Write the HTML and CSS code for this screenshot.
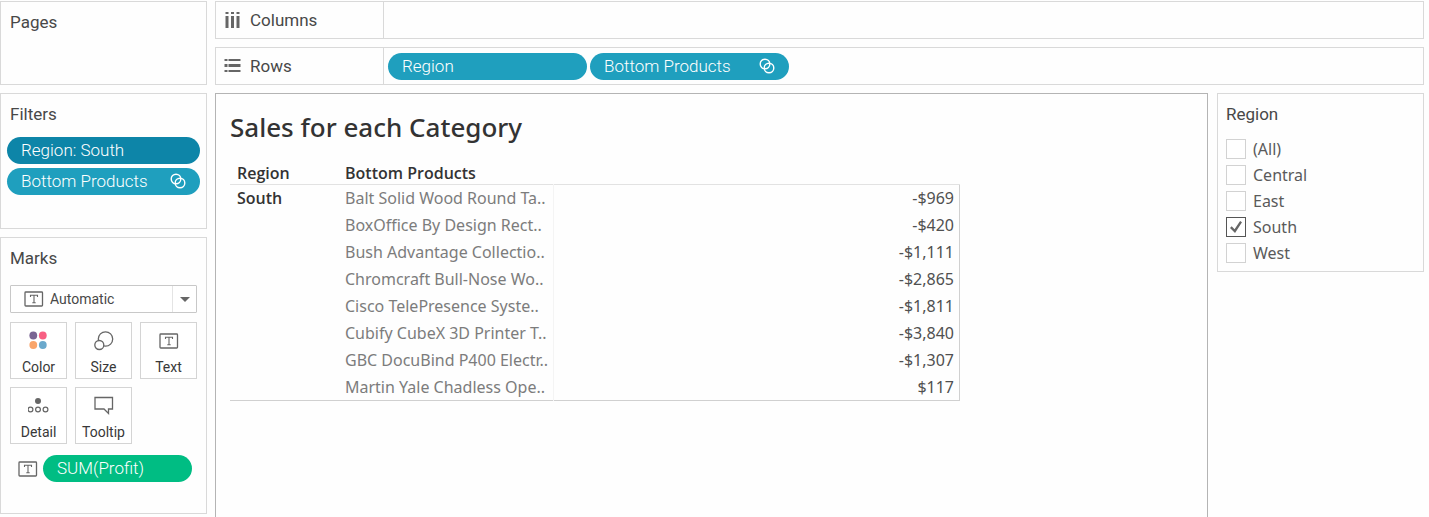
FILE: index.html
```html
<!DOCTYPE html>
<html lang="en">
<head>
<meta charset="utf-8">
<title>Sales for each Category</title>
<link rel="stylesheet" href="styles.css">
</head>
<body>
<svg class="defs" aria-hidden="true">
  <symbol id="i-set" viewBox="0 0 16 16"><g fill="none" stroke="currentColor" stroke-width="1.4"><circle cx="6" cy="6" r="4.8"/><circle cx="10" cy="10" r="4.8"/></g></symbol>
  <symbol id="i-text" viewBox="0 0 20 16"><rect x="1" y="1" width="17.500" height="14" rx=".8" fill="none" stroke="#666" stroke-width="1.3"/><path d="M6.500 6V4.200h7V6M10 4.200v7.600M8.300 11.800h3.400" fill="none" stroke="#666" stroke-width="1.1"/></symbol>
</svg>
<div class="workspace">
  <aside class="side">
    <section class="card pages"><h2>Pages</h2></section>
    <section class="card filters">
      <h2>Filters</h2>
      <div class="pill-list">
        <button class="pill context">Region: South</button>
        <button class="pill">Bottom Products <svg class="set"><use href="#i-set"/></svg></button>
      </div>
    </section>
    <section class="card marks">
      <h2>Marks</h2>
      <div class="mark-type">
        <svg class="text-icon"><use href="#i-text"/></svg>
        <select aria-label="Mark type"><option>Automatic</option></select>
        <span class="arrow"></span>
      </div>
      <div class="mark-grid">
        <button><svg viewBox="0 0 20 20"><circle cx="4.300" cy="4.500" r="3.900" fill="#7a6593"/><circle cx="13.800" cy="4.500" r="3.900" fill="#f85f83"/><circle cx="4.300" cy="14" r="3.900" fill="#f9a56b"/><circle cx="13.800" cy="14" r="3.900" fill="#6ba9cc"/></svg>Color</button>
        <button><svg viewBox="0 0 20 20" fill="#fff" stroke="#666" stroke-width="1.300"><circle cx="11.500" cy="8" r="7.200"/><circle cx="5.300" cy="14" r="4.500"/></svg>Size</button>
        <button><svg viewBox="0 -2 20 20"><use href="#i-text" width="20" height="16"/></svg>Text</button>
        <button><svg class="detail" viewBox="0 0 22 20"><circle cx="10" cy="5" r="3" fill="#666"/><g fill="none" stroke="#666" stroke-width="1.200"><circle cx="2.500" cy="13.500" r="2.400"/><circle cx="10" cy="13.500" r="2.400"/><circle cx="17.500" cy="13.500" r="2.400"/></g></svg>Detail</button>
        <button><svg viewBox="0 0 20 20" fill="none" stroke="#666" stroke-width="1.300"><path d="M1 1.500h17.500v11.500h-4v4.500l-4.500-4.500H1z"/></svg>Tooltip</button>
      </div>
      <div class="mark-row">
        <svg class="text-icon"><use href="#i-text"/></svg>
        <button class="pill measure">SUM(Profit)</button>
      </div>
    </section>
  </aside>
  <div class="content">
    <section class="shelf">
      <h2><svg viewBox="0 0 16 16" fill="#666"><path d="M1 0h3v2H1zM6.500 0h3v2h-3zM12 0h3v2h-3zM1 4h3v12H1zM6.500 4h3v12h-3zM12 4h3v12h-3z"/></svg>Columns</h2>
    </section>
    <section class="shelf">
      <h2><svg viewBox="0 0 16 16" fill="#666"><path d="M0 1h3v2H0zM4 1h12v2H4zM0 6h3v3H0zM4 6h12v3H4zM0 12h3v2H0zM4 12h12v2H4z"/></svg>Rows</h2>
      <div class="fields">
        <button class="pill">Region</button>
        <button class="pill">Bottom Products <svg class="set"><use href="#i-set"/></svg></button>
      </div>
    </section>
    <div class="view">
      <main class="sheet">
        <h1>Sales for each Category</h1>
        <table>
          <colgroup><col class="c-region"><col class="c-product"><col></colgroup>
          <thead><tr><th>Region</th><th>Bottom Products</th><th></th></tr></thead>
          <tbody>
            <tr><th rowspan="8" scope="rowgroup">South</th><td>Balt Solid Wood Round Ta..</td><td>-$969</td></tr>
            <tr><td>BoxOffice By Design Rect..</td><td>-$420</td></tr>
            <tr><td>Bush Advantage Collectio..</td><td>-$1,111</td></tr>
            <tr><td>Chromcraft Bull-Nose Wo..</td><td>-$2,865</td></tr>
            <tr><td>Cisco TelePresence Syste..</td><td>-$1,811</td></tr>
            <tr><td>Cubify CubeX 3D Printer T..</td><td>-$3,840</td></tr>
            <tr><td>GBC DocuBind P400 Electr..</td><td>-$1,307</td></tr>
            <tr><td>Martin Yale Chadless Ope..</td><td>$117</td></tr>
          </tbody>
        </table>
      </main>
      <section class="card region">
        <h2>Region</h2>
        <label><input type="checkbox">(All)</label>
        <label><input type="checkbox">Central</label>
        <label><input type="checkbox">East</label>
        <label><input type="checkbox" checked>South</label>
        <label><input type="checkbox">West</label>
      </section>
    </div>
  </div>
</div>
</body>
</html>
```
FILE: styles.css
```css
* { box-sizing: border-box; }
body {
  margin: 0;
  background: #fefefe;
  color: #484848;
  font: 17px/20px Roboto, "Liberation Sans", sans-serif;
}
.defs { position: absolute; width: 0; height: 0; }
h1, h2 { margin: 0; font-weight: 400; }
h2 { font-size: 17px; line-height: 20px; }
button, select { font: inherit; color: inherit; cursor: pointer; }

.workspace {
  display: grid;
  grid-template-columns: 207px minmax(0, 1fr);
  gap: 8px;
  min-height: 100vh;
  padding: 1px 5px 0 0;
}
.side { display: flex; flex-direction: column; gap: 8px; }
.card { border: 1px solid #d9d9d9; padding: 10px 9px; }
.pages { min-height: 84px; }
.filters { min-height: 136px; padding: 10px 6px; }
.filters h2 { padding-left: 3px; }
.pill-list { display: flex; flex-direction: column; gap: 4px; margin-top: 13px; }
.pill {
  display: flex;
  align-items: center;
  justify-content: space-between;
  height: 27px;
  padding: 0 14px 1px;
  border: 0;
  border-radius: 14px;
  background: #1f9fbe;
  color: #fff;
  font-weight: 300;
  text-align: left;
}
.context { background: #0d85a8; }
.set { width: 16px; height: 16px; }

.marks { min-height: 277px; }
.mark-type { position: relative; margin-top: 17px; }
.mark-type select {
  display: block;
  width: 100%;
  height: 28px;
  padding: 0 30px 0 39px;
  border: 1px solid #c8c8c8;
  border-radius: 1px;
  background: #fff;
  font-size: 14px;
  appearance: none;
}
.text-icon { width: 20px; height: 16px; }
.mark-type .text-icon { position: absolute; left: 14px; top: 6px; pointer-events: none; }
.arrow {
  position: absolute;
  right: 1px;
  top: 1px;
  display: grid;
  place-items: center;
  width: 24px;
  height: 26px;
  border-left: 1px solid #e4e4e4;
  pointer-events: none;
}
.arrow::before { content: ""; border: 5px solid transparent; border-top-color: #666; border-bottom: 0; }
.mark-grid {
  display: grid;
  grid-template-columns: repeat(3, minmax(0, 1fr));
  gap: 8px;
  margin-top: 9px;
}
.mark-grid button {
  display: flex;
  flex-direction: column;
  align-items: center;
  justify-content: space-between;
  height: 57px;
  padding: 8px 0 1px;
  border: 1px solid #d4d4d4;
  background: #fff;
  color: #383838;
  font-size: 14px;
}
.mark-grid svg { width: 20px; height: 20px; }
.mark-grid .detail { width: 22px; }
.mark-row { display: flex; align-items: center; gap: 5px; margin: 11px 5px 0 8px; }
.measure { flex: 1; background: #00bd83; }

.content { display: flex; flex-direction: column; gap: 8px; min-width: 0; }
.shelf { display: flex; height: 38px; border: 1px solid #d9d9d9; }
.shelf h2 {
  display: flex;
  align-items: center;
  gap: 9px;
  width: 168px;
  padding-left: 8px;
  border-right: 1px solid #d9d9d9;
}
.shelf h2 svg { width: 17px; height: 16px; }
.fields { display: flex; align-items: center; gap: 3px; padding-left: 4px; }
.fields .pill { width: 199px; }

.view { display: flex; flex: 1; align-items: flex-start; gap: 9px; }
.sheet {
  flex: 1;
  align-self: stretch;
  min-width: 0;
  padding: 15px 14px;
  border: 1px solid #b4b4b4;
  border-bottom: 0;
  font-family: "Noto Sans", "Open Sans", sans-serif;
}
h1 { color: #333; font-size: 26px; font-weight: 500; line-height: 36px; }
table {
  width: 730px;
  max-width: 100%;
  margin-top: 18px;
  border-collapse: collapse;
  table-layout: fixed;
  font-size: 16px;
  line-height: 20px;
}
.c-region { width: 115px; }
.c-product { width: 208px; }
th { padding: 0 0 0 7px; color: #333; font-family: "Open Sans", sans-serif; font-weight: 600; text-align: left; vertical-align: top; }
thead th { height: 21px; }
thead th + th { padding-left: 0; }
tbody { border: solid #d0d0d0; border-width: 1px 1px 1px 0; }
tbody tr:first-child > * { border-top: 1px solid #e2e2e2; }
tbody th { padding-top: 3px; }
td { height: 27px; padding: 1px 0 0; white-space: nowrap; }
td:nth-last-child(2) { border-right: 1px solid #f4f4f4; color: #7c7c7c; }
td:last-child { padding-right: 5px; color: #505050; text-align: right; }

.region { width: 207px; padding: 10px 8px 5px; }
.region h2 { margin-bottom: 12px; }
.region label {
  display: flex;
  align-items: center;
  gap: 7px;
  height: 26px;
  color: #5a5a5a;
  font: 400 16px/20px "Noto Sans", "Open Sans", sans-serif;
}
.region input {
  display: grid;
  place-items: center;
  width: 20px;
  height: 20px;
  margin: 0;
  border: 1px solid #d2d2d2;
  background: #fff;
  appearance: none;
}
.region input:checked { border-color: #555; }
.region input:checked::before {
  content: "";
  width: 12px;
  height: 12px;
  background: #666;
  clip-path: polygon(0 58%, 14% 44%, 38% 68%, 84% 0, 100% 10%, 42% 100%);
}
```
